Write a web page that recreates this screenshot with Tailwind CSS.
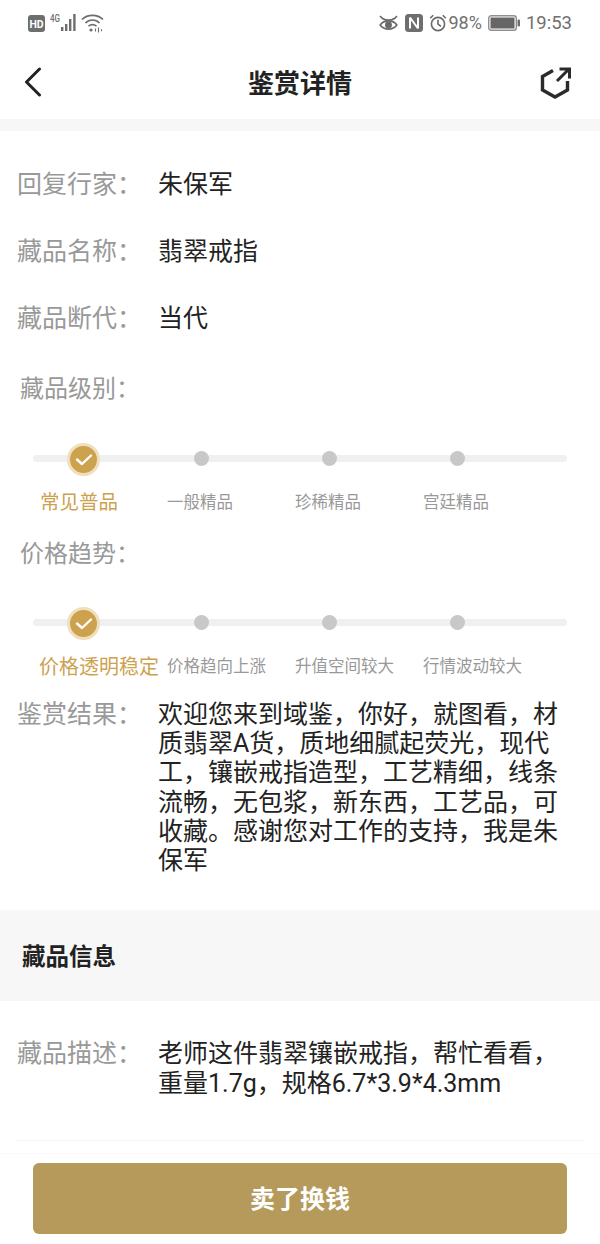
<!DOCTYPE html>
<html lang="zh">
<head>
<meta charset="utf-8">
<script src="https://cdn.jsdelivr.net/npm/@tailwindcss/browser@4"></script>
</head>
<body class="bg-white">
<div class="w-[600px] h-[1244px] overflow-hidden flex flex-col bg-white text-[#222] font-['Roboto','Noto_Sans_CJK_SC',sans-serif]">
  <!-- status bar -->
  <div class="h-[46px] flex items-center justify-between pl-[28px] pr-[28px] text-[#707070] shrink-0">
    <div class="flex items-center">
      <svg width="17" height="17" viewBox="0 0 17 17"><rect width="17" height="17" rx="3" fill="#6e6e6e"/><text x="8.5" y="12.5" font-size="10.5" font-weight="700" text-anchor="middle" fill="#fff" font-family="Roboto">HD</text></svg>
      <svg width="30" height="20" viewBox="0 0 30 20" class="ml-[5px]"><text x="0" y="9" font-size="11" font-weight="500" fill="#6e6e6e" font-family="Roboto" textLength="10" lengthAdjust="spacingAndGlyphs">4G</text><g fill="#6e6e6e"><rect x="11" y="14" width="2.4" height="4"/><rect x="15" y="11" width="2.4" height="7"/><rect x="19" y="6" width="2.4" height="12"/><rect x="23.2" y="1" width="2.4" height="17"/></g></svg>
      <svg width="23" height="19" viewBox="0 0 23 19" fill="none" stroke="#6e6e6e" stroke-width="1.7" class="ml-[1px]"><path d="M1 5.5C6.5 0 16.5 0 22 5.5"/><path d="M4.5 9C8.5 5 14.5 5 18.5 9"/><path d="M7.5 12.2C10 10.2 13 10.2 15.5 12.2"/><circle cx="10" cy="16" r="1.6" fill="#6e6e6e" stroke="none"/><path d="M14.5 14.5v3M17.5 13.5v5M20.5 15.2v2" stroke-width="1.1"/></svg>
    </div>
    <div class="flex items-center">
      <svg width="19" height="17" viewBox="0 0 19 17" fill="none" stroke="#6a6a6a" stroke-width="1.7"><path d="M1 1l2.5 2.5C7 5.5 12 5.5 15.5 3.5L18 1"/><path d="M1.2 10C5 4.5 14 4.5 17.8 10C14 15.5 5 15.5 1.2 10Z"/><circle cx="9.5" cy="10" r="2.6" fill="#6a6a6a"/></svg>
      <svg width="18" height="18" viewBox="0 0 18 18" class="ml-[7px]"><rect width="18" height="18" rx="3.5" fill="#6e6e6e"/><path d="M5 3.5v11M13 3.5v11M5 3.5l8 11" stroke="#fff" stroke-width="2" fill="none"/></svg>
      <svg width="18" height="18" viewBox="0 0 18 18" fill="none" stroke="#6a6a6a" stroke-width="1.6" class="ml-[6px]"><circle cx="9" cy="10" r="6.6"/><path d="M9 5.8V10l3 2.4M1.2 4.2L4.2 1.2M16.8 4.2L13.8 1.2"/></svg>
      <span class="ml-[2px] text-[18px] leading-none">98%</span>
      <svg width="32" height="16" viewBox="0 0 32 16" class="ml-[6px]"><rect x="0.7" y="0.7" width="27.6" height="14.6" rx="2.5" fill="none" stroke="#8f8f8f" stroke-width="1.4"/><rect x="2.5" y="2.5" width="24" height="11" fill="#666"/><rect x="29.5" y="4.5" width="2.5" height="7" rx="1" fill="#6e6e6e"/></svg>
      <span class="ml-[6px] text-[18.5px] leading-none">19:53</span>
    </div>
  </div>
  <!-- header -->
  <div class="h-[73px] relative flex items-center justify-center shrink-0 pt-[3px]">
    <svg width="18" height="30" viewBox="0 0 18 30" fill="none" stroke="#222" stroke-width="3" stroke-linecap="round" stroke-linejoin="round" class="absolute left-[24px] top-[21px]"><path d="M15.5 2L2.5 15l13 13"/></svg>
    <span class="text-[26px] font-bold leading-none text-[#222]">鉴赏详情</span>
    <svg width="32" height="34" viewBox="0 0 32 34" fill="none" stroke="#2b2b2b" stroke-width="3.4" class="absolute left-[540px] top-[20px]"><path d="M13 4.5L2.5 10.5V24L15 31l12.5-7V15"/><path d="M17 15L28 4M19.5 3H29.5V12.5" stroke-width="3"/></svg>
  </div>
  <div class="h-[12px] bg-[#f7f7f7] shrink-0"></div>

  <div class="flex-1 flex flex-col text-[25px]">
    <div class="h-[67px] mt-[20px] flex items-center px-[17px]"><span class="w-[141px] text-[#999]">回复行家：</span><span>朱保军</span></div>
    <div class="h-[67px] flex items-center px-[17px]"><span class="w-[141px] text-[#999]">藏品名称：</span><span>翡翠戒指</span></div>
    <div class="h-[67px] flex items-center px-[17px]"><span class="w-[141px] text-[#999]">藏品断代：</span><span>当代</span></div>
    <div class="h-[40px] mt-[17px] pl-[20px] flex items-center text-[#999] text-[24px]">藏品级别：</div>

    <!-- slider 1 -->
    <div class="relative h-[32px] mt-[34px] mx-[33px] flex items-center">
      <div class="absolute inset-x-0 top-[12px] h-[7px] rounded-full bg-[#f0f0f0]"></div>
      <div class="absolute left-[34px] top-0 w-[33px] h-[33px] rounded-full bg-[#cda24f] border-[3px] border-[#f0dfbd] flex items-center justify-center">
        <svg width="18" height="13" viewBox="0 0 18 13" fill="none" stroke="#fff" stroke-width="2.4" stroke-linecap="round" stroke-linejoin="round"><path d="M2 6.5l5 4.5 9-8.5"/></svg>
      </div>
      <div class="absolute left-[161px] top-[8px] w-[15px] h-[15px] rounded-full bg-[#c8c8c8]"></div>
      <div class="absolute left-[289px] top-[8px] w-[15px] h-[15px] rounded-full bg-[#c8c8c8]"></div>
      <div class="absolute left-[417px] top-[8px] w-[15px] h-[15px] rounded-full bg-[#c8c8c8]"></div>
    </div>
    <div class="relative h-[30px] mt-[13px] text-[16.5px] text-[#999] leading-[30px] whitespace-nowrap">
      <span class="absolute left-[40px] text-[19.5px] text-[#cda24f]">常见普品</span>
      <span class="absolute left-[167px]">一般精品</span>
      <span class="absolute left-[295px]">珍稀精品</span>
      <span class="absolute left-[423px]">宫廷精品</span>
    </div>

    <div class="h-[40px] mt-[16px] pl-[20px] flex items-center text-[#999] text-[24px]">价格趋势：</div>

    <!-- slider 2 -->
    <div class="relative h-[32px] mt-[33px] mx-[33px] flex items-center">
      <div class="absolute inset-x-0 top-[12px] h-[7px] rounded-full bg-[#f0f0f0]"></div>
      <div class="absolute left-[34px] top-0 w-[33px] h-[33px] rounded-full bg-[#cda24f] border-[3px] border-[#f0dfbd] flex items-center justify-center">
        <svg width="18" height="13" viewBox="0 0 18 13" fill="none" stroke="#fff" stroke-width="2.4" stroke-linecap="round" stroke-linejoin="round"><path d="M2 6.5l5 4.5 9-8.5"/></svg>
      </div>
      <div class="absolute left-[161px] top-[8px] w-[15px] h-[15px] rounded-full bg-[#c8c8c8]"></div>
      <div class="absolute left-[289px] top-[8px] w-[15px] h-[15px] rounded-full bg-[#c8c8c8]"></div>
      <div class="absolute left-[417px] top-[8px] w-[15px] h-[15px] rounded-full bg-[#c8c8c8]"></div>
    </div>
    <div class="relative h-[30px] mt-[13px] text-[16.5px] text-[#999] leading-[30px] whitespace-nowrap">
      <span class="absolute left-[39px] text-[20px] text-[#cda24f]">价格透明稳定</span>
      <span class="absolute left-[167px]">价格趋向上涨</span>
      <span class="absolute left-[295px]">升值空间较大</span>
      <span class="absolute left-[423px]">行情波动较大</span>
    </div>

    <div class="flex px-[17px] mt-[18px] leading-[29.2px]">
      <span class="w-[141px] shrink-0 text-[#999]">鉴赏结果：</span>
      <span class="w-[402px]">欢迎您来到域鉴，你好，就图看，材质翡翠A货，质地细腻起荧光，现代工，镶嵌戒指造型，工艺精细，线条流畅，无包浆，新东西，工艺品，可收藏。感谢您对工作的支持，我是朱保军</span>
    </div>

    <div class="h-[91px] mt-[35px] pt-[4px] bg-[#f7f7f7] flex items-center pl-[22px] text-[23.5px] font-bold text-[#222]">藏品信息</div>

    <div class="flex px-[17px] mt-[38px] leading-[30px]">
      <span class="w-[141px] shrink-0 text-[#999]">藏品描述：</span>
      <span class="w-[402px]">老师这件翡翠镶嵌戒指，帮忙看看，重量1.7g，规格6.7*3.9*4.3mm</span>
    </div>
  </div>

  <!-- footer -->
  <div class="mx-[16px] border-t border-[#f3f3f3]"></div>
  <div class="mt-[12px] border-t border-[#fafafa] px-[33px] pt-[9px] pb-[10px]">
    <div class="h-[71px] pt-[3px] rounded-[6px] bg-[#b59a5b] flex items-center justify-center text-white text-[25px] font-bold">卖了换钱</div>
  </div>
</div>
</body>
</html>
